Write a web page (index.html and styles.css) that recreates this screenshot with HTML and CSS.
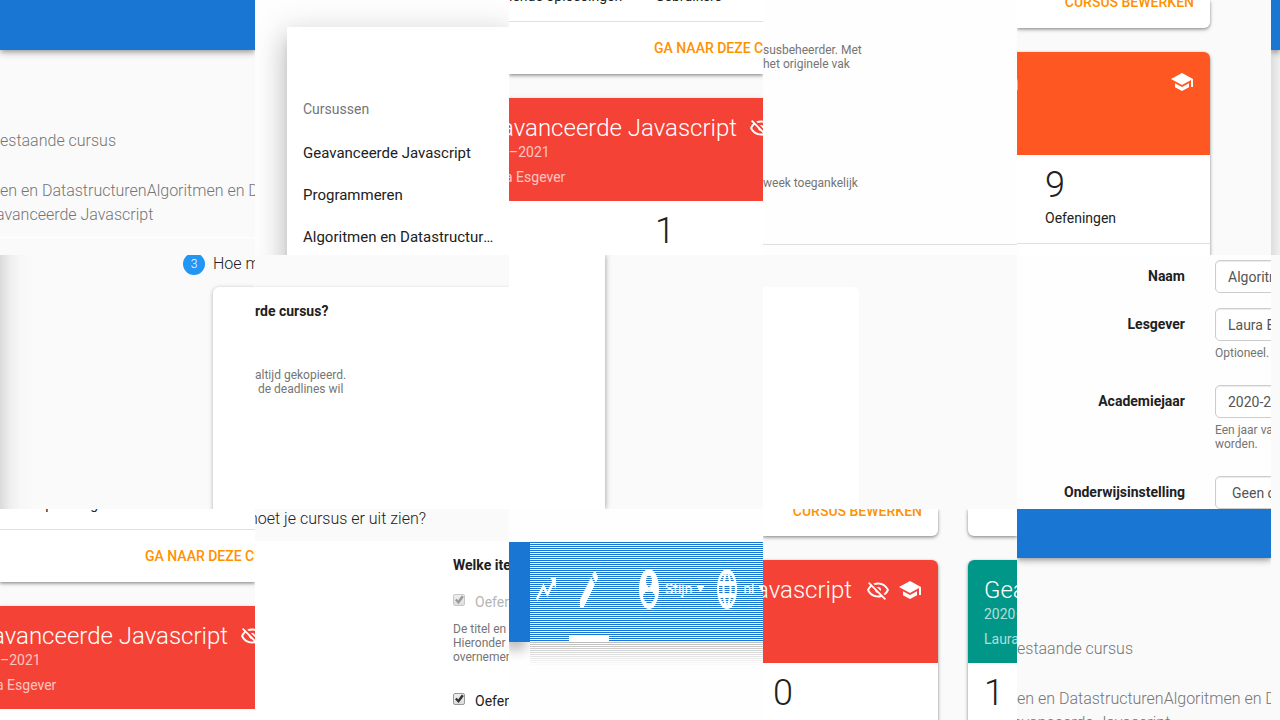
FILE: index.html
```html
<!DOCTYPE html>
<html lang="nl">
<head>
<meta charset="utf-8">
<title>Cursussen</title>
<link rel="stylesheet" href="styles.css">
</head>
<body>
<svg class="defs" aria-hidden="true">
  <symbol id="eye-off" viewBox="0 0 24 24"><path d="M2,5.27L3.28,4L20,20.72L18.73,22L15.65,18.92C14.5,19.3 13.28,19.5 12,19.5C7,19.5 2.73,16.39 1,12C1.69,10.24 2.79,8.69 4.19,7.46L2,5.27M12,9A3,3 0 0,1 15,12C15,12.35 14.94,12.69 14.83,13L11,9.17C11.31,9.06 11.65,9 12,9M12,4.5C17,4.5 21.27,7.61 23,12C22.18,14.08 20.79,15.88 19,17.19L17.58,15.76C18.94,14.82 20.06,13.54 20.82,12C19.17,8.64 15.76,6.5 12,6.5C10.91,6.5 9.84,6.68 8.84,7L7.3,5.47C8.74,4.85 10.33,4.5 12,4.5M3.18,12C4.83,15.36 8.24,17.5 12,17.5C12.69,17.5 13.37,17.43 14,17.29L11.72,15C10.29,14.85 9.15,13.71 9,12.28L5.6,8.87C4.61,9.72 3.78,10.78 3.18,12Z"/></symbol>
  <symbol id="school" viewBox="0 0 24 24"><path d="M12,3L1,9L12,15L21,10.09V17H23V9M5,13.18V17.18L12,21L19,17.18V13.18L12,17L5,13.18Z"/></symbol>
  <symbol id="trend" viewBox="0 0 24 24" preserveAspectRatio="none"><path d="M16,6L18.29,8.29L13.41,13.17L9.41,9.17L2,16.59L3.41,18L9.41,12L13.41,16L19.71,9.71L22,12V6H16Z"/></symbol>
  <symbol id="pencil" viewBox="0 0 24 24" preserveAspectRatio="none"><path d="M20.71,7.04C21.1,6.65 21.1,6 20.71,5.63L18.37,3.29C18,2.9 17.35,2.9 16.96,3.29L15.12,5.12L18.87,8.87M3,17.25V21H6.75L17.81,9.93L14.06,6.18L3,17.25Z"/></symbol>
  <symbol id="account" viewBox="0 0 24 24" preserveAspectRatio="none"><path d="M12,19.2C9.5,19.2 7.29,17.92 6,16C6.03,14 10,12.9 12,12.9C14,12.9 17.97,14 18,16C16.71,17.92 14.5,19.2 12,19.2M12,5A3,3 0 0,1 15,8A3,3 0 0,1 12,11A3,3 0 0,1 9,8A3,3 0 0,1 12,5M12,2A10,10 0 0,0 2,12A10,10 0 0,0 12,22A10,10 0 0,0 22,12C22,6.47 17.5,2 12,2Z"/></symbol>
  <symbol id="globe" viewBox="0 0 24 24" preserveAspectRatio="none"><path d="M16.36,14C16.44,13.34 16.5,12.68 16.5,12C16.5,11.32 16.44,10.66 16.36,10H19.74C19.9,10.64 20,11.31 20,12C20,12.69 19.9,13.36 19.74,14M14.59,19.56C15.19,18.45 15.65,17.25 15.97,16H18.92C17.96,17.65 16.43,18.93 14.59,19.56M14.34,14H9.66C9.56,13.34 9.5,12.68 9.5,12C9.5,11.32 9.56,10.65 9.66,10H14.34C14.43,10.65 14.5,11.32 14.5,12C14.5,12.68 14.43,13.34 14.34,14M12,19.96C11.17,18.76 10.5,17.43 10.09,16H13.91C13.5,17.43 12.83,18.76 12,19.96M8,8H5.08C6.03,6.34 7.57,5.06 9.4,4.44C8.8,5.55 8.35,6.75 8,8M5.08,16H8C8.35,17.25 8.8,18.45 9.4,19.56C7.57,18.93 6.03,17.65 5.08,16M4.26,14C4.1,13.36 4,12.69 4,12C4,11.31 4.1,10.64 4.26,10H7.64C7.56,10.66 7.5,11.32 7.5,12C7.5,12.68 7.56,13.34 7.64,14M12,4.03C12.83,5.23 13.5,6.57 13.91,8H10.09C10.5,6.57 11.17,5.23 12,4.03M18.92,8H15.97C15.65,6.75 15.19,5.55 14.59,4.44C16.43,5.07 17.96,6.34 18.92,8M12,2C6.47,2 2,6.5 2,12A10,10 0 0,0 12,22A10,10 0 0,0 22,12A10,10 0 0,0 12,2Z"/></symbol>
</svg>
<main class="mosaic">

  <section class="tile tile-first">
    <div class="appbar"></div>
    <div class="summary">
      <p class="lead">estaande cursus</p>
      <p class="lead">en en DatastructurenAlgoritmen en Da</p>
      <p class="lead lead-cut">avanceerde Javascript</p>
    </div>
    <div class="rule-white"></div>
  </section>

  <section class="tile tile-plain">
    <nav class="drawer">
      <h2 class="drawer-title">Cursussen</h2>
      <a class="drawer-link" href="#">Geavanceerde Javascript</a>
      <a class="drawer-link" href="#">Programmeren</a>
      <a class="drawer-link" href="#">Algoritmen en Datastructuren</a>
    </nav>
  </section>

  <section class="tile">
    <div class="card-end">
      <div class="stat-labels"><span>iende oplossingen</span><span>Gebruikers</span></div>
      <div class="actions actions-mid"><a class="action" href="#">GA NAAR DEZE CU</a></div>
    </div>
    <div class="card-open">
      <div class="banner red banner-cut">
        <div class="banner-row"><h2 class="title title-cut">avanceerde Javascript</h2><svg class="icon"><use href="#eye-off"/></svg></div>
        <p class="sub">–2021</p>
        <p class="sub sub-cut">a Esgever</p>
      </div>
      <div class="number number-mid">1</div>
    </div>
  </section>

  <section class="tile tile-plain">
    <p class="help help-top">susbeheerder. Met<br>het originele vak</p>
    <p class="help help-week">week toegankelijk</p>
    <div class="rule-gray"></div>
  </section>

  <section class="tile tile-cards">
    <div class="card card-last card-last-upper"><a class="action" href="#">CURSUS BEWERKEN</a></div>
    <div class="card card-next">
      <div class="banner orange banner-cut">
        <div class="banner-row banner-row-spread"><h2 class="title title-tail">n</h2><svg class="icon"><use href="#school"/></svg></div>
      </div>
      <div class="number number-nine">9</div>
      <div class="stat-name">Oefeningen</div>
      <div class="card-rule"></div>
    </div>
  </section>

  <section class="tile tile-edge"><div class="appbar"></div></section>

  <section class="tile tile-step">
    <div class="step-head"><span class="step-dot">3</span><span class="step-name">Hoe m</span></div>
    <div class="panel panel-left"></div>
  </section>

  <section class="tile tile-question">
    <div class="panel-flat">
      <h3 class="question">rde cursus?</h3>
      <p class="help help-copy">altijd gekopieerd.<br>&nbsp;de deadlines wil</p>
    </div>
  </section>

  <section class="tile tile-side"><div class="panel-side"></div></section>

  <section class="tile tile-corner"><div class="panel-corner"></div></section>

  <section class="tile tile-plain">
    <form class="form">
      <label class="label" for="naam">Naam</label>
      <div class="field"><input class="control" id="naam" type="text" value="Algoritmen en Datastructuren"></div>
      <label class="label" for="lesgever">Lesgever</label>
      <div class="field"><input class="control" id="lesgever" type="text" value="Laura Esgever"><p class="help help-field">Optioneel.</p></div>
      <label class="label" for="jaar">Academiejaar</label>
      <div class="field"><input class="control" id="jaar" type="text" value="2020-2021"><p class="help help-field">Een jaar va<br>worden.</p></div>
      <label class="label" for="instelling">Onderwijsinstelling</label>
      <div class="field"><select class="control" id="instelling"><option>Geen onderwijsinstelling</option></select></div>
    </form>
  </section>

  <section class="tile tile-blank"></section>

  <section class="tile">
    <div class="card-end card-end-lower">
      <div class="stat-labels"><span>iende oplossingen</span></div>
      <div class="actions actions-mid"><a class="action" href="#">GA NAAR DEZE CU</a></div>
    </div>
    <div class="card-open">
      <div class="banner red banner-cut">
        <div class="banner-row"><h2 class="title title-cut">avanceerde Javascript</h2><svg class="icon"><use href="#eye-off"/></svg></div>
        <p class="sub">–2021</p>
        <p class="sub sub-cut">a Esgever</p>
      </div>
    </div>
  </section>

  <section class="tile tile-options">
    <h2 class="options-head">noet je cursus er uit zien?</h2>
    <div class="options">
      <h3 class="question">Welke ite</h3>
      <label class="check check-off"><input class="tick" type="checkbox" checked disabled>Oefen</label>
      <p class="help">De titel en<br>Hieronder<br>overnemen</p>
      <label class="check check-on"><input class="tick" type="checkbox" checked>Oefen</label>
    </div>
  </section>

  <section class="tile tile-plain tile-nav">
    <nav class="nav">
      <div class="nav-solid"></div>
      <div class="nav-lines">
        <a class="nav-link" href="#" aria-label="Trend"><svg class="tall"><use href="#trend"/></svg></a>
        <a class="nav-link nav-active" href="#" aria-label="Bewerken"><svg class="tall"><use href="#pencil"/></svg></a>
        <button class="nav-menu nav-user" type="button"><svg class="tall"><use href="#account"/></svg><span>Stijn</span><i class="caret"></i></button>
        <button class="nav-menu" type="button"><svg class="tall"><use href="#globe"/></svg><span>nl</span><i class="caret"></i></button>
      </div>
    </nav>
  </section>

  <section class="tile tile-pair">
    <div class="pair-col">
      <div class="card card-last card-last-lower"><a class="action" href="#">CURSUS BEWERKEN</a></div>
      <div class="card card-next">
        <div class="banner red banner-cut">
          <div class="banner-row banner-row-end"><h2 class="title">avascript</h2><svg class="icon"><use href="#eye-off"/></svg><svg class="icon"><use href="#school"/></svg></div>
        </div>
        <div class="number number-zero">0</div>
      </div>
    </div>
    <div class="pair-col pair-right">
      <div class="card card-last card-last-lower"></div>
      <div class="card card-next">
        <div class="banner green">
          <div class="banner-row"><h2 class="title">Gea</h2></div>
          <p class="sub">2020–</p>
          <p class="sub">Laura</p>
        </div>
        <div class="number number-one">1</div>
      </div>
    </div>
  </section>

  <section class="tile tile-lower">
    <div class="appbar"></div>
    <div class="summary">
      <p class="lead">estaande cursus</p>
      <p class="lead">en en DatastructurenAlgoritmen en Da</p>
      <p class="lead lead-cut">avanceerde Javascript</p>
    </div>
  </section>

  <section class="tile tile-blank"></section>
</main>
</body>
</html>
```
FILE: styles.css
```css
* { box-sizing: border-box; }
html, body { height: 100%; }
body {
  margin: 0;
  background: #fafafa;
  color: #212121;
  font-family: Roboto, "Liberation Sans", sans-serif;
  font-size: 14px;
  line-height: 20px;
  overflow: hidden;
}
h2, h3, p { margin: 0; }
a { text-decoration: none; }
.defs { display: none; }

.mosaic {
  display: grid;
  grid-template-columns: 255fr 254fr 254fr 254fr 254fr 9fr;
  grid-template-rows: 255fr 254fr 211fr;
  height: 100vh;
}
.tile { min-width: 0; min-height: 0; overflow: hidden; background: #fafafa; white-space: nowrap; }
.tile-plain { background: #fefefe; }

/* Page head with breadcrumb text */
.appbar {
  height: 50px;
  background: #1976d2;
  box-shadow: 0 2px 4px -1px rgba(0,0,0,.2), 0 4px 5px rgba(0,0,0,.14), 0 1px 10px rgba(0,0,0,.12);
}
.tile-lower .appbar { height: 49px; }
.summary { padding-top: 79px; }
.lead { font-size: 16px; font-weight: 300; line-height: 24px; color: #757575; }
.lead + .lead { margin-top: 26px; }
.lead + .lead-cut { margin-top: 0; margin-left: -4px; }
.rule-white { height: 1px; margin-top: 10px; background: #fff; }
.tile-edge { background: linear-gradient(90deg, #dedede, #efefef); }

/* Drawer */
.drawer {
  height: 100%;
  margin: 27px 0 0 32px;
  padding: 70px 12px 0 16px;
  background: #fff;
  box-shadow: 0 8px 10px -5px rgba(0,0,0,.2), 0 16px 24px 2px rgba(0,0,0,.14), 0 6px 30px 5px rgba(0,0,0,.12);
}
.drawer-title { padding-bottom: 11px; font-size: 14px; font-weight: 400; line-height: 24px; color: #757575; }
.drawer-link {
  display: block;
  overflow: hidden;
  text-overflow: ellipsis;
  font-size: 15px;
  line-height: 42px;
  color: #212121;
}

/* Course cards */
.card, .card-end { background: #fff; box-shadow: 0 1px 3px rgba(0,0,0,.3), 0 2px 4px rgba(0,0,0,.2); }
.card-end { display: flow-root; height: 74px; padding-top: 1px; }
.stat-labels { display: grid; grid-template-columns: 146px 1fr; margin-top: -15px; padding-bottom: 15px; }
.card-end-lower { height: 73px; padding-top: 0; }
.actions { padding: 16px 0; border-top: 1px solid #e0e0e0; }
.actions-mid { padding-left: 145px; }
.action { font-weight: 500; color: #ff9100; }
.card-open { margin-top: 24px; background: #fff; height: 100%; box-shadow: 0 1px 4px rgba(0,0,0,.2); }
.banner { height: 103px; padding: 16px; color: #fff; }
.banner-cut { padding-left: 0; }
.banner-row { display: flex; align-items: center; gap: 8px; height: 28px; }
.banner-row-end { justify-content: flex-end; }
.banner-row-spread { justify-content: space-between; }
.title { font-size: 24px; font-weight: 300; line-height: 28px; }
.title-cut { margin-left: -8px; }
.title-tail { margin-left: -11px; }
.title + .icon { margin-left: 6px; }
.title-cut + .icon { margin-left: 4px; }
.icon { flex: none; width: 24px; height: 24px; fill: currentColor; }
.sub { color: rgba(255,255,255,.7); }
.sub + .sub { margin-top: 5px; }
.sub-cut { margin-left: -4px; }
.red { background: #f44336; }
.orange { background: #ff5722; }
.green { background: #009688; }
.number { font-size: 36px; font-weight: 300; line-height: 40px; padding-top: 10px; }
.number-mid { padding-left: 146px; }
.number-nine { padding-left: 28px; }
.number-zero { padding-left: 10px; }
.number-one { padding-left: 16px; }
.stat-name { padding: 3px 28px 15px; }
.card-rule { height: 1px; background: #e0e0e0; }
.card { border-radius: 6px; overflow: hidden; }
.card-last { text-align: right; border-top-left-radius: 0; border-top-right-radius: 0; }
.card-last-upper { height: 28px; }
.card-last-lower { height: 27px; }
.card-last .action { display: block; margin: -8px 16px 0 0; }
.card-next { margin-top: 24px; height: 100%; }
.tile-cards { padding-right: 61px; }
.tile-cards .card, .pair-col:first-child .card { border-top-left-radius: 0; border-bottom-left-radius: 0; }
.tile-pair { display: grid; grid-template-columns: 175px 1fr; gap: 30px; }
.pair-right { min-width: 0; }
.pair-right .card { border-top-right-radius: 0; border-bottom-right-radius: 0; }
.pair-right .card-next { border-top-left-radius: 6px; }

/* Help texts */
.help { font-size: 12px; line-height: 14px; color: #757575; }
.help-top { padding-top: 43px; }
.help-week { padding-top: 105px; }
.rule-gray { height: 1px; margin-top: 54px; background: #e0e0e0; }

/* Step */
.tile-step { background: linear-gradient(90deg, #dadada, #eee 10px, #f7f7f7 20px, #fafafa 34px); }
.step-head { display: flex; align-items: center; gap: 8px; height: 32px; padding: 0 0 14px 183px; }
.step-dot {
  flex: none; width: 22px; height: 22px; border-radius: 50%;
  background: #2196f3; color: #fff;
  font-size: 12px; font-weight: 300; line-height: 22px; text-align: center;
}
.step-name { font-size: 16px; font-weight: 300; }
.panel { height: 100%; background: #fff; box-shadow: 0 1px 4px rgba(0,0,0,.3); }
.panel-left { margin-left: 213px; border-top-left-radius: 6px; }
.tile-question, .tile-corner { padding-top: 32px; }
.panel-flat { height: 100%; padding-top: 14px; background: #fff; box-shadow: 0 0 3px rgba(0,0,0,.12); }
.question { font-size: 14px; font-weight: 700; }
.help-copy { margin-top: 47px; }
.panel-side { width: 96px; height: 100%; background: #fff; box-shadow: 1px 0 5px rgba(0,0,0,.3); }
.panel-corner { width: 96px; height: 100%; background: #fff; border-top-right-radius: 6px; }

/* Course form */
.form { display: grid; grid-template-columns: 168px 240px; column-gap: 30px; padding-top: 5px; }
.label { padding-top: 6px; font-weight: 700; text-align: right; }
.field { padding-bottom: 15px; }
.control {
  display: block; width: 100%; height: 33px; padding: 6px 12px;
  border: 1px solid #ccc; border-radius: 5px; background: #fff;
  box-shadow: inset 0 1px 1px rgba(0,0,0,.08);
  color: #555; font: inherit; appearance: none;
}
select.control { padding-left: 16px; }
.help-field { padding: 5px 0 10px; }

/* Copy options */
.tile-options { background: #fafafa; }
.options-head { height: 32px; font-size: 16px; font-weight: 300; margin-left: -6px; }
.options { height: 100%; padding: 14px 0 0 198px; background: #fff; }
.check { display: flex; align-items: center; gap: 10px; }
.check-off { margin: 17px 0 10px; color: #b5b5b5; }
.check-on { margin-top: 27px; }
.tick {
  flex: none; width: 12px; height: 12px; margin: 0 0 4px;
  appearance: none; border: 1px solid #999; border-radius: 2px;
  background: linear-gradient(#eee, #ddd);
}
.tick::after {
  content: ""; display: block; width: 10px; height: 10px; background: #333;
  clip-path: polygon(10% 52%, 28% 38%, 42% 54%, 78% 6%, 98% 20%, 46% 90%);
}
.tick:disabled { border-color: #c8c8c8; }
.tick:disabled::after { background: #999; }

/* Navigation bar */
.tile-nav { padding-top: 33px; }
.nav { display: grid; grid-template-columns: 21px 1fr; height: 100px; }
.nav-solid { position: relative; z-index: 1; background: #1976d2; box-shadow: -4px 8px 12px rgba(0,0,0,.25); }
.nav-lines {
  position: relative; z-index: 2;
  display: flex; align-items: stretch; min-width: 0; padding-left: 4px;
  background: repeating-linear-gradient(#1976d2 0 1px, #fff 1px 2px);
  color: #fff;
}
.nav-lines::after {
  content: ""; position: absolute; top: 100%; left: 0; right: 0; height: 24px;
  background:
    repeating-linear-gradient(transparent 0 1px, #fefefe 1px 2px),
    linear-gradient(#bbb, #fefefe);
}
.nav-link { display: flex; flex: none; align-items: flex-start; justify-content: center; padding-top: 23px; color: #fff; }
.nav-active { width: 40px; margin: 0 28px 0 11px; border-bottom: 6px solid #fff; }
.tall { flex: none; width: 24px; height: 48px; fill: currentColor; }
.nav-menu {
  display: flex; flex: none; align-items: center; gap: 4px; padding: 0 0 6px;
  border: 0; background: none; color: #fff; font: inherit;
}
.nav-user { margin-right: 11px; }
.caret { width: 8px; height: 7px; background: #fff; clip-path: polygon(0 0, 100% 0, 50% 100%); }
```
